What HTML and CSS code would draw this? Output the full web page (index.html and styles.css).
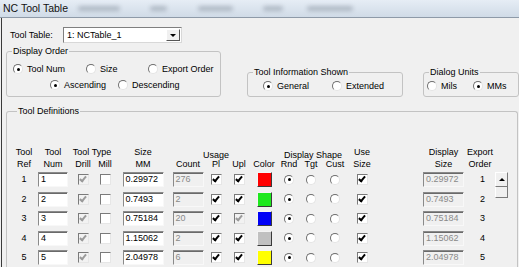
FILE: index.html
```html
<!doctype html>
<html lang="en">
<head>
	<meta charset="UTF-8">
	<title>NC Tool Table</title>
	<link rel="stylesheet" href="styles.css">
</head>
<body>
	<div class="caption">
		<span class="caption-text">NC Tool Table</span>
		<span class="smudge s1"></span>
		<span class="smudge s2"></span>
		<span class="smudge s3"></span>
		<span class="smudge s4"></span>
		<span class="smudge s5"></span>
	</div>

	<div class="client">
		<div class="table-row">
			<span class="lbl">Tool Table:</span>
			<div class="combo">
				<span class="combo-text">1: NCTable_1</span>
				<span class="combo-btn"><i class="tri-down"></i></span>
			</div>
		</div>

		<div class="groups">
			<fieldset class="grp grp-order">
				<legend>Display Order</legend>
				<div class="opts order-1">
					<span class="opt w73"><i class="rb on"></i>Tool Num</span>
					<span class="opt w62"><i class="rb"></i>Size</span>
					<span class="opt"><i class="rb"></i>Export Order</span>
				</div>
				<div class="opts order-2">
					<span class="opt w68"><i class="rb on"></i>Ascending</span>
					<span class="opt"><i class="rb"></i>Descending</span>
				</div>
			</fieldset>

			<fieldset class="grp grp-info">
				<legend>Tool Information Shown</legend>
				<div class="opts info-1">
					<span class="opt w69"><i class="rb on"></i>General</span>
					<span class="opt"><i class="rb"></i>Extended</span>
				</div>
			</fieldset>

			<fieldset class="grp grp-units">
				<legend>Dialog Units</legend>
				<div class="opts units-1">
					<span class="opt w46"><i class="rb"></i>Mils</span>
					<span class="opt"><i class="rb on"></i>MMs</span>
				</div>
			</fieldset>
		</div>

		<fieldset class="grp grp-defs">
			<legend>Tool Definitions</legend>

			<div class="cols head">
				<span class="h c1">Tool<br>Ref</span>
				<span class="h c2">Tool<br>Num</span>
				<span class="h c3 top">Tool Type</span>
				<span class="h c3 bot">Drill</span>
				<span class="h c4 bot">Mill</span>
				<span class="h c5">Size<br>MM</span>
				<span class="h c6 bot">Count</span>
				<span class="h c7 top low">Usage</span>
				<span class="h c7 bot">Pl</span>
				<span class="h c8 bot">Upl</span>
				<span class="h c9 bot">Color</span>
				<span class="h c10 top low">Display Shape</span>
				<span class="h c10 bot">Rnd</span>
				<span class="h c11 bot">Tgt</span>
				<span class="h c12 bot">Cust</span>
				<span class="h c13">Use<br>Size</span>
				<span class="h c15">Display<br>Size</span>
				<span class="h c16">Export<br>Order</span>
			</div>

			<div class="list">
				<div class="rows">
					<div class="cols row">
						<span>1</span>
						<span class="tb w30">1</span>
						<i class="cb on off"></i>
						<i class="cb"></i>
						<span class="tb w41">0.29972</span>
						<span class="tb w31 off">276</span>
						<i class="cb on"></i>
						<i class="cb on"></i>
						<i class="sw red"></i>
						<i class="rb on"></i>
						<i class="rb"></i>
						<i class="rb"></i>
						<i class="cb on"></i>
						<span></span>
						<span class="tb w41 off">0.29972</span>
						<span class="num">1</span>
					</div>
					<div class="cols row">
						<span>2</span>
						<span class="tb w30">2</span>
						<i class="cb on off"></i>
						<i class="cb"></i>
						<span class="tb w41">0.7493</span>
						<span class="tb w31 off">2</span>
						<i class="cb on"></i>
						<i class="cb on"></i>
						<i class="sw green"></i>
						<i class="rb on"></i>
						<i class="rb"></i>
						<i class="rb"></i>
						<i class="cb on"></i>
						<span></span>
						<span class="tb w41 off">0.7493</span>
						<span class="num">2</span>
					</div>
					<div class="cols row">
						<span>3</span>
						<span class="tb w30">3</span>
						<i class="cb on off"></i>
						<i class="cb"></i>
						<span class="tb w41">0.75184</span>
						<span class="tb w31 off">20</span>
						<i class="cb on"></i>
						<i class="cb on off"></i>
						<i class="sw blue"></i>
						<i class="rb on"></i>
						<i class="rb"></i>
						<i class="rb"></i>
						<i class="cb on"></i>
						<span></span>
						<span class="tb w41 off">0.75184</span>
						<span class="num">3</span>
					</div>
					<div class="cols row">
						<span>4</span>
						<span class="tb w30">4</span>
						<i class="cb on off"></i>
						<i class="cb"></i>
						<span class="tb w41">1.15062</span>
						<span class="tb w31 off">2</span>
						<i class="cb on"></i>
						<i class="cb on"></i>
						<i class="sw grey"></i>
						<i class="rb on"></i>
						<i class="rb"></i>
						<i class="rb"></i>
						<i class="cb on"></i>
						<span></span>
						<span class="tb w41 off">1.15062</span>
						<span class="num">4</span>
					</div>
					<div class="cols row">
						<span>5</span>
						<span class="tb w30">5</span>
						<i class="cb on off"></i>
						<i class="cb"></i>
						<span class="tb w41">2.04978</span>
						<span class="tb w31 off">6</span>
						<i class="cb on"></i>
						<i class="cb on"></i>
						<i class="sw yellow"></i>
						<i class="rb on"></i>
						<i class="rb"></i>
						<i class="rb"></i>
						<i class="cb on"></i>
						<span></span>
						<span class="tb w41 off">2.04978</span>
						<span class="num">5</span>
					</div>
				</div>
				<div class="sb">
					<span class="sb-up"><i class="tri-up"></i></span>
					<span class="sb-thumb"></span>
				</div>
			</div>
		</fieldset>
	</div>
</body>
</html>
```

FILE: styles.css
```css
body{margin:0;width:519px;height:267px;overflow:hidden;background:#f0f0f0;font:9px/11px "Liberation Sans",Arial,sans-serif;color:#000;}
i{font-style:normal;}

/* title bar */
.caption{display:flex;align-items:center;height:17px;padding-left:3px;background:linear-gradient(#e6edf5,#d0dbe7);border-bottom:1px solid #8e9aa8;overflow:hidden;}
.caption-text{font-size:10.5px;color:#111;width:75px;flex:none;}
.smudge{height:5px;border-radius:3px;background:rgba(95,105,120,.35);filter:blur(2px);flex:none;}
.s1{width:42px;}
.s2{width:17px;margin-left:30px;}
.s3{width:35px;margin-left:31px;}
.s4{width:20px;margin-left:30px;}
.s5{width:46px;margin-left:24px;}

.client{margin-left:1px;border-left:1px solid #3a3a3a;padding:9px 0 0 4px;height:249px;box-sizing:border-box;}

/* tool table combo */
.table-row{display:flex;align-items:center;height:16px;}
.lbl{width:53px;margin-left:4px;}
.combo{display:flex;align-items:center;width:119px;height:16px;box-sizing:border-box;background:#fff;border:1px solid;border-color:#7f7f7f #d8d8d8 #d8d8d8 #7f7f7f;}
.combo-text{padding-left:3px;}
.combo-btn{display:flex;align-items:center;justify-content:center;margin-left:auto;margin-right:1px;width:14px;height:12px;box-sizing:border-box;background:#f0f0f0;border:1px solid;border-color:#fff #555 #555 #fff;}
.tri-down{width:0;height:0;border-left:3px solid transparent;border-right:3px solid transparent;border-top:3px solid #000;}
.tri-up{width:0;height:0;border-left:3px solid transparent;border-right:3px solid transparent;border-bottom:3px solid #000;}

/* group boxes */
.groups{display:flex;align-items:flex-end;margin-top:3px;}
.grp{margin:0;padding:0;border:1px solid #c3c3c3;border-radius:3px;box-sizing:border-box;min-width:0;}
.grp legend{padding:0 1px;margin-left:5px;line-height:11px;}
.grp-order{width:215px;padding-bottom:4px;}
.grp-info{width:156px;margin-left:26px;padding-bottom:3px;}
.grp-units{width:96px;margin-left:20px;padding-bottom:3px;}

.opts{display:flex;align-items:center;height:14px;}
.order-1{margin-top:5px;padding-left:6px;}
.order-2{margin-top:2px;padding-left:43px;}
.info-1{margin-top:1px;padding-left:15px;}
.units-1{margin-top:1px;padding-left:3px;}
.opt{display:flex;align-items:center;flex:none;}
.opt .rb{margin-right:4px;}
.w46{width:46px;}
.w62{width:62px;}
.w68{width:68px;}
.w69{width:69px;}
.w73{width:73px;}

/* radio, checkbox, swatch, text box */
.rb{display:inline-flex;align-items:center;justify-content:center;width:10px;height:10px;box-sizing:border-box;border-radius:50%;background:#fff;border:1px solid;border-color:#6e6e6e #e4e4e4 #e4e4e4 #6e6e6e;}
.rb.on::after{content:"";width:3px;height:3px;border-radius:50%;background:#000;}
.cb{display:inline-flex;align-items:center;justify-content:center;width:11px;height:11px;box-sizing:border-box;background:#fff;border:1px solid;border-color:#7a7a7a #e6e6e6 #e6e6e6 #7a7a7a;}
.cb.on::after{content:"";width:2px;height:5px;margin-top:-2px;border:solid #000;border-width:0 2px 2px 0;transform:rotate(40deg);}
.cb.off{background:#f2f2f2;}
.cb.off::after{border-color:#9a9a9a;}
.sw{display:block;width:15px;height:15px;box-sizing:border-box;border:1px solid;border-color:#f4f4f4 #3a3a3a #3a3a3a #f4f4f4;}
.red{background:#ff0000;}
.green{background:#1ee81e;}
.blue{background:#0000f6;}
.grey{background:#c0c0c0;}
.yellow{background:#ffff00;}
.tb{display:flex;align-items:center;height:15px;box-sizing:border-box;padding-left:2px;background:#fff;border:1px solid;border-color:#8a8a8a #f8f8f8 #f8f8f8 #8a8a8a;box-shadow:inset 0 1px #6a6a6a;}
.tb.off{background:#f0f0f0;color:#8a8a8a;}
.w30{width:30px;}
.w31{width:31px;}
.w41{width:41px;}

/* tool definitions */
.grp-defs{width:512px;height:170px;margin-top:9px;padding:29px 0 0 5px;border-bottom:none;}
.cols{display:grid;grid-template-columns:24px 34px 26px 18px 58px 32px 24px 22px 28px 22px 22px 26px 28px 46px 43px 30px;justify-items:center;}
.head{grid-template-rows:12px 12px;line-height:12px;}
.h{grid-row:1 / 3;text-align:center;white-space:nowrap;}
.h.top{grid-row:1;}
.h.bot{grid-row:2;}
.h.low{padding-top:3px;}
.c1{grid-column:1;}
.c2{grid-column:2;}
.c3{grid-column:3;}
.c3.top{grid-column:3 / 5;}
.c4{grid-column:4;}
.c5{grid-column:5;}
.c6{grid-column:6;}
.c7{grid-column:7;}
.c8{grid-column:8;}
.c9{grid-column:9;}
.c10{grid-column:10;}
.c10.top{grid-column:10 / 13;}
.c11{grid-column:11;}
.c12{grid-column:12;}
.c13{grid-column:13;}
.c15{grid-column:15;}
.c16{grid-column:16;}

.list{display:flex;}
.row{height:19.5px;align-items:center;}
.num{padding-left:5px;}
.sb{display:flex;flex-direction:column;width:13px;margin-top:2px;}
.sb-up{display:flex;align-items:center;justify-content:center;height:15px;box-sizing:border-box;background:#f0f0f0;border:1px solid;border-color:#fff #7a7a7a #7a7a7a #fff;}
.sb-thumb{height:11px;box-sizing:border-box;border:1px solid;border-top:none;border-color:#fff #7a7a7a #7a7a7a #fff;}
```
